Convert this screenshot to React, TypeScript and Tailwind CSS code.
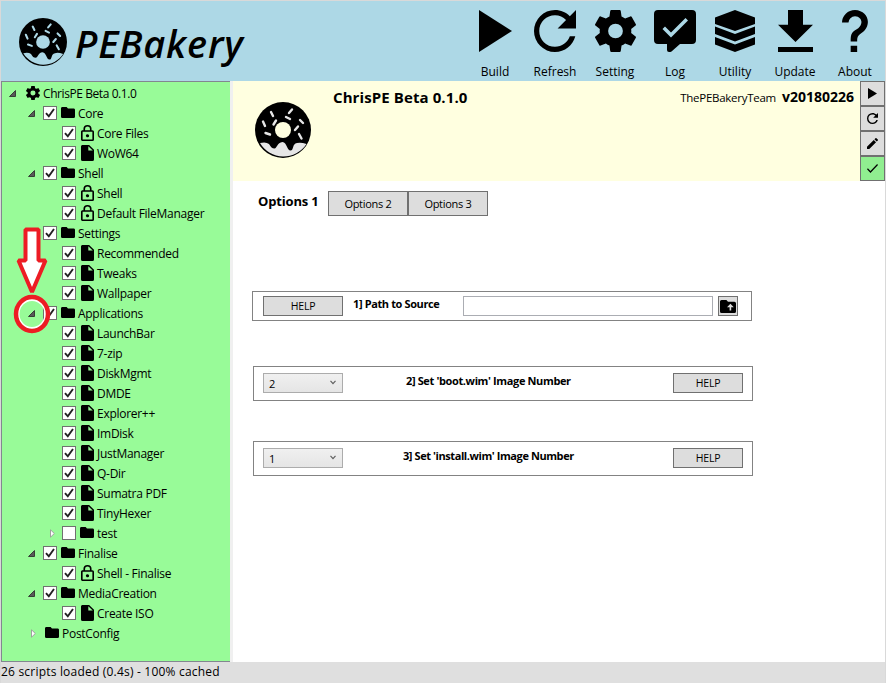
import type { ReactNode } from "react";

type IconProps = { d: string; box: string; className: string };

function Icon({ d, box, className }: IconProps) {
  return (
    <svg viewBox={box} preserveAspectRatio="none" className={`block shrink-0 fill-current ${className}`}>
      <path fillRule="evenodd" d={d} />
    </svg>
  );
}

const PLAY = "M8 5.14V19.14L19 12.14Z";
const REFRESH =
  "M17.65 6.35C16.2 4.9 14.21 4 12 4A8 8 0 0 0 4 12A8 8 0 0 0 12 20C15.73 20 18.84 17.45 19.73 14H17.65C16.83 16.33 14.61 18 12 18A6 6 0 0 1 6 12A6 6 0 0 1 12 6C13.66 6 15.14 6.69 16.22 7.78L13 11H20V4L17.65 6.35Z";
const GEAR =
  "M12 15.5A3.5 3.5 0 0 1 8.5 12A3.5 3.5 0 0 1 12 8.5A3.5 3.5 0 0 1 15.5 12A3.5 3.5 0 0 1 12 15.5M19.43 12.97C19.47 12.65 19.5 12.33 19.5 12C19.5 11.67 19.47 11.34 19.43 11L21.54 9.37C21.73 9.22 21.78 8.95 21.66 8.73L19.66 5.27C19.54 5.05 19.27 4.96 19.05 5.05L16.56 6.05C16.04 5.66 15.5 5.32 14.87 5.07L14.5 2.42C14.46 2.18 14.25 2 14 2H10C9.75 2 9.54 2.18 9.5 2.42L9.13 5.07C8.5 5.32 7.96 5.66 7.44 6.05L4.95 5.05C4.73 4.96 4.46 5.05 4.34 5.27L2.34 8.73C2.21 8.95 2.27 9.22 2.46 9.37L4.57 11C4.53 11.34 4.5 11.67 4.5 12C4.5 12.33 4.53 12.65 4.57 12.97L2.46 14.63C2.27 14.78 2.21 15.05 2.34 15.27L4.34 18.73C4.46 18.95 4.73 19.03 4.95 18.95L7.44 17.94C7.96 18.34 8.5 18.68 9.13 18.93L9.5 21.58C9.54 21.82 9.75 22 10 22H14C14.25 22 14.46 21.82 14.5 21.58L14.87 18.93C15.5 18.67 16.04 18.34 16.56 17.94L19.05 18.95C19.27 19.03 19.54 18.95 19.66 18.73L21.66 15.27C21.78 15.05 21.73 14.78 21.54 14.63L19.43 12.97Z";
const LOG =
  "M4 0H38A4 4 0 0 1 42 4V30A4 4 0 0 1 38 34H26L17.5 41.5Q16.5 42 15 42Q13 42 13 40V34H4A4 4 0 0 1 0 30V4A4 4 0 0 1 4 0ZM17 27.5L34 10.5L31.5 8L17 22.5L11 16.5L8.5 19Z";
const LAYERS =
  "M20 0L40 7.5V14L20 21L0 14V7.5ZM0 16.5L20 24L40 16.5V24L20 31.5L0 24ZM0 27L20 34.5L40 27V34.5L20 42L0 34.5Z";
const DOWNLOAD = "M5 20H19V18H5ZM19 9H15V3H9V9H5L12 16L19 9Z";
const HELP =
  "M10 19H13V22H10V19M12 2C17.35 2.22 19.68 7.62 16.5 11.67C15.67 12.67 14.33 13.33 13.67 14.17C13 15 13 16 13 17H10C10 15.33 10 13.92 10.67 12.92C11.33 11.92 12.67 11.33 13.5 10.67C15.92 8.43 15.32 5.26 12 5A3 3 0 0 0 9 8H6A6 6 0 0 1 12 2Z";
const LOCK =
  "M12 17C10.89 17 10 16.1 10 15C10 13.89 10.89 13 12 13A2 2 0 0 1 14 15A2 2 0 0 1 12 17M18 20V10H6V20H18M18 8A2 2 0 0 1 20 10V20A2 2 0 0 1 18 22H6C4.89 22 4 21.1 4 20V10C4 8.89 4.89 8 6 8H7V6A5 5 0 0 1 12 1A5 5 0 0 1 17 6V8H18M12 3A3 3 0 0 0 9 6V8H15V6A3 3 0 0 0 12 3Z";
const FOLDER = "M10 4H4C2.89 4 2 4.89 2 6V18A2 2 0 0 0 4 20H20A2 2 0 0 0 22 18V8C22 6.89 21.1 6 20 6H12L10 4Z";
const FILE = "M13 9V3.5L18.5 9M6 2C4.89 2 4 2.89 4 4V20A2 2 0 0 0 6 22H18A2 2 0 0 0 20 20V8L14 2H6Z";
const PENCIL =
  "M20.71 7.04C21.1 6.65 21.1 6 20.71 5.63L18.37 3.29C18 2.9 17.35 2.9 16.96 3.29L15.12 5.12L18.87 8.87M3 17.25V21H6.75L17.81 9.93L14.06 6.18L3 17.25Z";
const CHECK = "M21 7L9 19L3.5 13.5L4.91 12.09L9 16.17L19.59 5.59L21 7Z";
const FOLDER_UP =
  "M20 6A2 2 0 0 1 22 8V18A2 2 0 0 1 20 20H4A2 2 0 0 1 2 18V6C2 4.89 2.89 4 4 4H10L12 6H20M10.75 13H14V17H16V13H19.25L15 8.75Z";

function Donut({ className, icing, hole, sprinkle }: { className: string; icing: string; hole: string; sprinkle: string }) {
  return (
    <svg viewBox="0 0 56 56" className={`block shrink-0 ${className}`}>
      <circle cx="28" cy="28" r="28" fill="#000" />
      <path
        fill={icing}
        d="M5 41Q11 39.500 14 42C16 45 17 46.500 19.500 46.500C22 46.500 22 40.500 27.500 40C32 40.500 32 48.500 35.500 48.500C39 48.500 37 41.500 42 41Q46 40 51.500 42A27.300 27.300 0 0 1 5 41Z"
      />
      <circle cx="28" cy="28" r="8" fill={hole} />
      <path
        stroke={sprinkle}
        strokeWidth="2.400"
        strokeLinecap="round"
        d="M16 10L18 14M37 7.500L34 11M31 15L35 17M45 18L48 21M8 19.500L10 24M21 18.500L18.500 22.500M43 24.500L40 28M10.500 31L15 32.500M44 32L46.500 36.500"
      />
    </svg>
  );
}

function Tool({ label, children }: { label: string; children: ReactNode }) {
  return (
    <div className="flex w-[60px] flex-col items-center">
      <div className="flex h-[42px] items-center justify-center">{children}</div>
      <span className="mt-[11px] text-[12px] leading-[17px] whitespace-nowrap">{label}</span>
    </div>
  );
}

function Checkbox({ checked }: { checked: boolean }) {
  return (
    <span className="block size-[14px] shrink-0 border border-[#707070] bg-white">
      {checked && (
        <svg viewBox="0 0 12 12" className="block size-[12px]">
          <path d="M2 6.200L4.800 9.300L10 2" fill="none" stroke="#212121" strokeWidth="1.900" />
        </svg>
      )}
    </span>
  );
}

function Arrow({ open }: { open: boolean }) {
  return open ? (
    <svg viewBox="0 0 7 7" className="block h-[7px] w-[7px] shrink-0">
      <path d="M6.500 .5V6.500H.5Z" fill="#595959" stroke="#262626" strokeWidth=".8" />
    </svg>
  ) : (
    <svg viewBox="0 0 5 9" className="block h-[9px] w-[5px] shrink-0">
      <path d="M.5 .8V8.200L4.300 4.500Z" fill="#fff" stroke="#989898" strokeWidth=".9" />
    </svg>
  );
}

type Kind = "folder" | "file" | "lock";

function KindIcon({ kind }: { kind: Kind }) {
  if (kind === "folder") return <Icon d={FOLDER} box="2 4 20 16" className="-mt-px h-[11px] w-[14px]" />;
  if (kind === "file") return <Icon d={FILE} box="4 2 16 20" className="ml-px h-[16px] w-[13px]" />;
  return <Icon d={LOCK} box="4 1 16 21" className="ml-px h-[16px] w-[13px]" />;
}

type Row = [level: number, kind: Kind, label: string, arrow?: "open" | "closed" | "none", checked?: boolean];

const rows: Row[] = [
  [1, "folder", "Core", "open"],
  [2, "lock", "Core Files"],
  [2, "file", "WoW64"],
  [1, "folder", "Shell", "open"],
  [2, "lock", "Shell"],
  [2, "lock", "Default FileManager"],
  [1, "folder", "Settings"],
  [2, "file", "Recommended"],
  [2, "file", "Tweaks"],
  [2, "file", "Wallpaper"],
  [1, "folder", "Applications", "open"],
  [2, "file", "LaunchBar"],
  [2, "file", "7-zip"],
  [2, "file", "DiskMgmt"],
  [2, "file", "DMDE"],
  [2, "file", "Explorer++"],
  [2, "file", "ImDisk"],
  [2, "file", "JustManager"],
  [2, "file", "Q-Dir"],
  [2, "file", "Sumatra PDF"],
  [2, "file", "TinyHexer"],
  [2, "folder", "test", "closed", false],
  [1, "folder", "Finalise", "open"],
  [2, "lock", "Shell - Finalise"],
  [1, "folder", "MediaCreation", "open"],
  [2, "file", "Create ISO"],
];

function TreeRow({ row }: { row: Row }) {
  const [level, kind, label, arrow = "none", checked = true] = row;
  return (
    <div className={`flex h-5 items-center ${level === 1 ? "pl-[23px]" : "pl-[42px]"}`}>
      <span className={`flex w-[18px] shrink-0 ${arrow === "closed" ? "pl-[6px]" : "pl-[3px]"}`}>
        {arrow !== "none" && <Arrow open={arrow === "open"} />}
      </span>
      <Checkbox checked={checked} />
      <span className="ml-[4px] flex w-[14px] shrink-0 justify-center">
        <KindIcon kind={kind} />
      </span>
      <span className="mt-[2px] ml-[3px] tracking-[-0.280px] whitespace-nowrap">{label}</span>
    </div>
  );
}

function Button({ className, children }: { className: string; children: ReactNode }) {
  return (
    <button className={`flex shrink-0 items-center justify-center border border-[#707070] bg-[#ddd] ${className}`}>{children}</button>
  );
}

function Select({ value }: { value: string }) {
  return (
    <div className="flex h-5 w-[80px] shrink-0 items-center justify-between border border-[#acacac] bg-linear-to-b from-[#f0f0f0] to-[#e5e5e5] pr-[6px] pl-[5px] text-[11px]">
      <span className="pt-[2px]">{value}</span>
      <svg viewBox="0 0 6 5" className="mb-px h-[5px] w-[6px]">
        <path d="M.5 .8L3 3.600L5.500 .8" fill="none" stroke="#606060" strokeWidth="1.200" />
      </svg>
    </div>
  );
}

export default function App() {
  return (
    <div className="relative flex h-[683px] w-[886px] flex-col overflow-hidden border-t border-r border-l border-[#d9d9d9] bg-[#f0f0f0] font-['Open_Sans','Noto_Sans',sans-serif] text-[12px] text-black">
      <header className="flex h-[80px] shrink-0 justify-between bg-[#add8e6]">
        <div className="flex">
          <Donut className="mt-[17px] ml-[18px] size-[48px]" icing="#add8e6" hole="#add8e6" sprinkle="#add8e6" />
          <h1 className="mt-[17px] ml-[8px] text-[38px] leading-[50px] font-semibold tracking-[0.850px] italic">PEBakery</h1>
        </div>
        <nav className="flex pt-[9px]">
          <Tool label="Build"><Icon d={PLAY} box="8 5.14 11 14" className="h-[42px] w-[33px]" /></Tool>
          <Tool label="Refresh"><Icon d={REFRESH} box="4 4 16 16" className="size-[42px]" /></Tool>
          <Tool label="Setting"><Icon d={GEAR} box="2.270 2 19.460 20" className="h-[42px] w-[41px]" /></Tool>
          <Tool label="Log"><Icon d={LOG} box="0 0 42 42" className="size-[42px]" /></Tool>
          <Tool label="Utility"><Icon d={LAYERS} box="0 0 40 42" className="h-[42px] w-[40px]" /></Tool>
          <Tool label="Update"><Icon d={DOWNLOAD} box="5 3 14 17" className="h-[42px] w-[35px]" /></Tool>
          <Tool label="About"><Icon d={HELP} box="6 2 12 20" className="h-[42px] w-[26px]" /></Tool>
        </nav>
      </header>

      <div className="flex min-h-0 flex-1">
        <aside className="w-[229px] border-t border-b border-l border-[#828790] bg-[#98fb98] pt-px">
          <div className="flex h-5 items-center pl-[7px]">
            <Arrow open />
            <Icon d={GEAR} box="2.270 2 19.460 20" className="ml-[10px] size-[14px]" />
            <span className="mt-[2px] ml-[3px] tracking-[-0.420px] whitespace-nowrap">ChrisPE Beta 0.1.0</span>
          </div>
          {rows.map((row, i) => (
            <TreeRow key={i} row={row} />
          ))}
          <div className="flex h-5 items-center pl-[29px]">
            <Arrow open={false} />
            <span className="ml-[9px]"><KindIcon kind="folder" /></span>
            <span className="mt-[2px] ml-[3px] tracking-[-0.280px]">PostConfig</span>
          </div>
        </aside>

        <main className="ml-[3px] flex-1 bg-white">
          <section className="flex h-[100px] bg-[#ffffe0]">
            <Donut className="mt-[21px] ml-[22px] size-[56px]" icing="#e6e6e6" hole="#ffffe0" sprinkle="#e6e6e6" />
            <h2 className="mt-[6px] ml-[22px] text-[15px] leading-5 font-bold tracking-[0.100px] whitespace-nowrap">ChrisPE Beta 0.1.0</h2>
            <div className="mt-[6px] mr-[6px] ml-auto flex items-baseline gap-[6px] leading-5 whitespace-nowrap">
              <span className="text-[11.500px] tracking-[-0.270px]">ThePEBakeryTeam</span>
              <span className="text-[14px] font-bold">v20180226</span>
            </div>
            <div className="flex w-[25px] flex-col">
              <Button className="size-[25px]"><Icon d={PLAY} box="8 5.14 11 14" className="h-[11px] w-[9px]" /></Button>
              <Button className="size-[25px]"><Icon d={REFRESH} box="4 4 16 16" className="size-[11px]" /></Button>
              <Button className="size-[25px]"><Icon d={PENCIL} box="3 3 18 18" className="size-[11px]" /></Button>
              <button className="flex size-[25px] items-center justify-center border border-[#707070] bg-[#90ee90]">
                <Icon d={CHECK} box="3.500 5.590 17.500 13.410" className="h-[9px] w-[11px]" />
              </button>
            </div>
          </section>

          <div className="flex pt-[10px] pl-[25px]">
            <span className="w-[70px] text-[13px] leading-5 font-bold tracking-[-0.170px] whitespace-nowrap">Options 1</span>
            <Button className="h-[25px] w-[80px] pt-[2px] text-[11px] tracking-[-0.280px]">Options 2</Button>
            <Button className="h-[25px] w-[80px] pt-[2px] text-[11px] tracking-[-0.280px]">Options 3</Button>
          </div>

          <div className="mt-[75px] ml-[19px] flex h-[30px] w-[500px] items-start border border-[#838383] pt-[4px] pl-[10px]">
            <Button className="h-5 w-[80px] pt-[2px] text-[10.500px] tracking-[-0.200px]">HELP</Button>
            <span className="ml-[10px] w-[110px] text-[11px] leading-[16px] font-bold tracking-[-0.380px] whitespace-nowrap">1] Path to Source</span>
            <input className="h-5 w-[250px] border border-[#abadb3] bg-white" />
            <Button className="ml-[5px] size-5"><Icon d={FOLDER_UP} box="2 4 20 16" className="h-[13px] w-[16px]" /></Button>
          </div>

          <div className="mt-[45px] ml-5 flex h-[35px] w-[500px] border border-[#838383] px-[9px] pt-[6px]">
            <Select value="2" />
            <span className="flex-1 pl-[63px] text-[11px] leading-[16px] font-bold tracking-[-0.370px] whitespace-nowrap">2] Set 'boot.wim' Image Number</span>
            <Button className="h-5 w-[70px] pt-[2px] text-[10.500px] tracking-[-0.200px]">HELP</Button>
          </div>

          <div className="mt-[40px] ml-5 flex h-[35px] w-[500px] border border-[#838383] px-[9px] pt-[6px]">
            <Select value="1" />
            <span className="flex-1 pl-[60px] text-[11px] leading-[16px] font-bold tracking-[-0.420px] whitespace-nowrap">3] Set 'install.wim' Image Number</span>
            <Button className="h-5 w-[70px] pt-[2px] text-[10.500px] tracking-[-0.200px]">HELP</Button>
          </div>
        </main>
      </div>

      <footer className="h-[21px] shrink-0 bg-[#dfdfdf] leading-5 tracking-[0.200px] whitespace-nowrap">26 scripts loaded (0.4s) - 100% cached</footer>

      <svg viewBox="0 0 38 108" className="pointer-events-none absolute top-[225px] left-[12px] h-[108px] w-[38px]">
        <path d="M12.500 3.500H25.500V34.500H32.500L19 66L5.500 34.500H12.500Z" fill="#fff" stroke="#ed1c24" strokeWidth="4" strokeLinejoin="bevel" />
        <ellipse cx="19" cy="88" rx="13.500" ry="14" fill="none" stroke="#fff" strokeWidth="2" />
        <ellipse cx="19" cy="88" rx="16" ry="17" fill="none" stroke="#ed1c24" strokeWidth="4.500" />
      </svg>
    </div>
  );
}
